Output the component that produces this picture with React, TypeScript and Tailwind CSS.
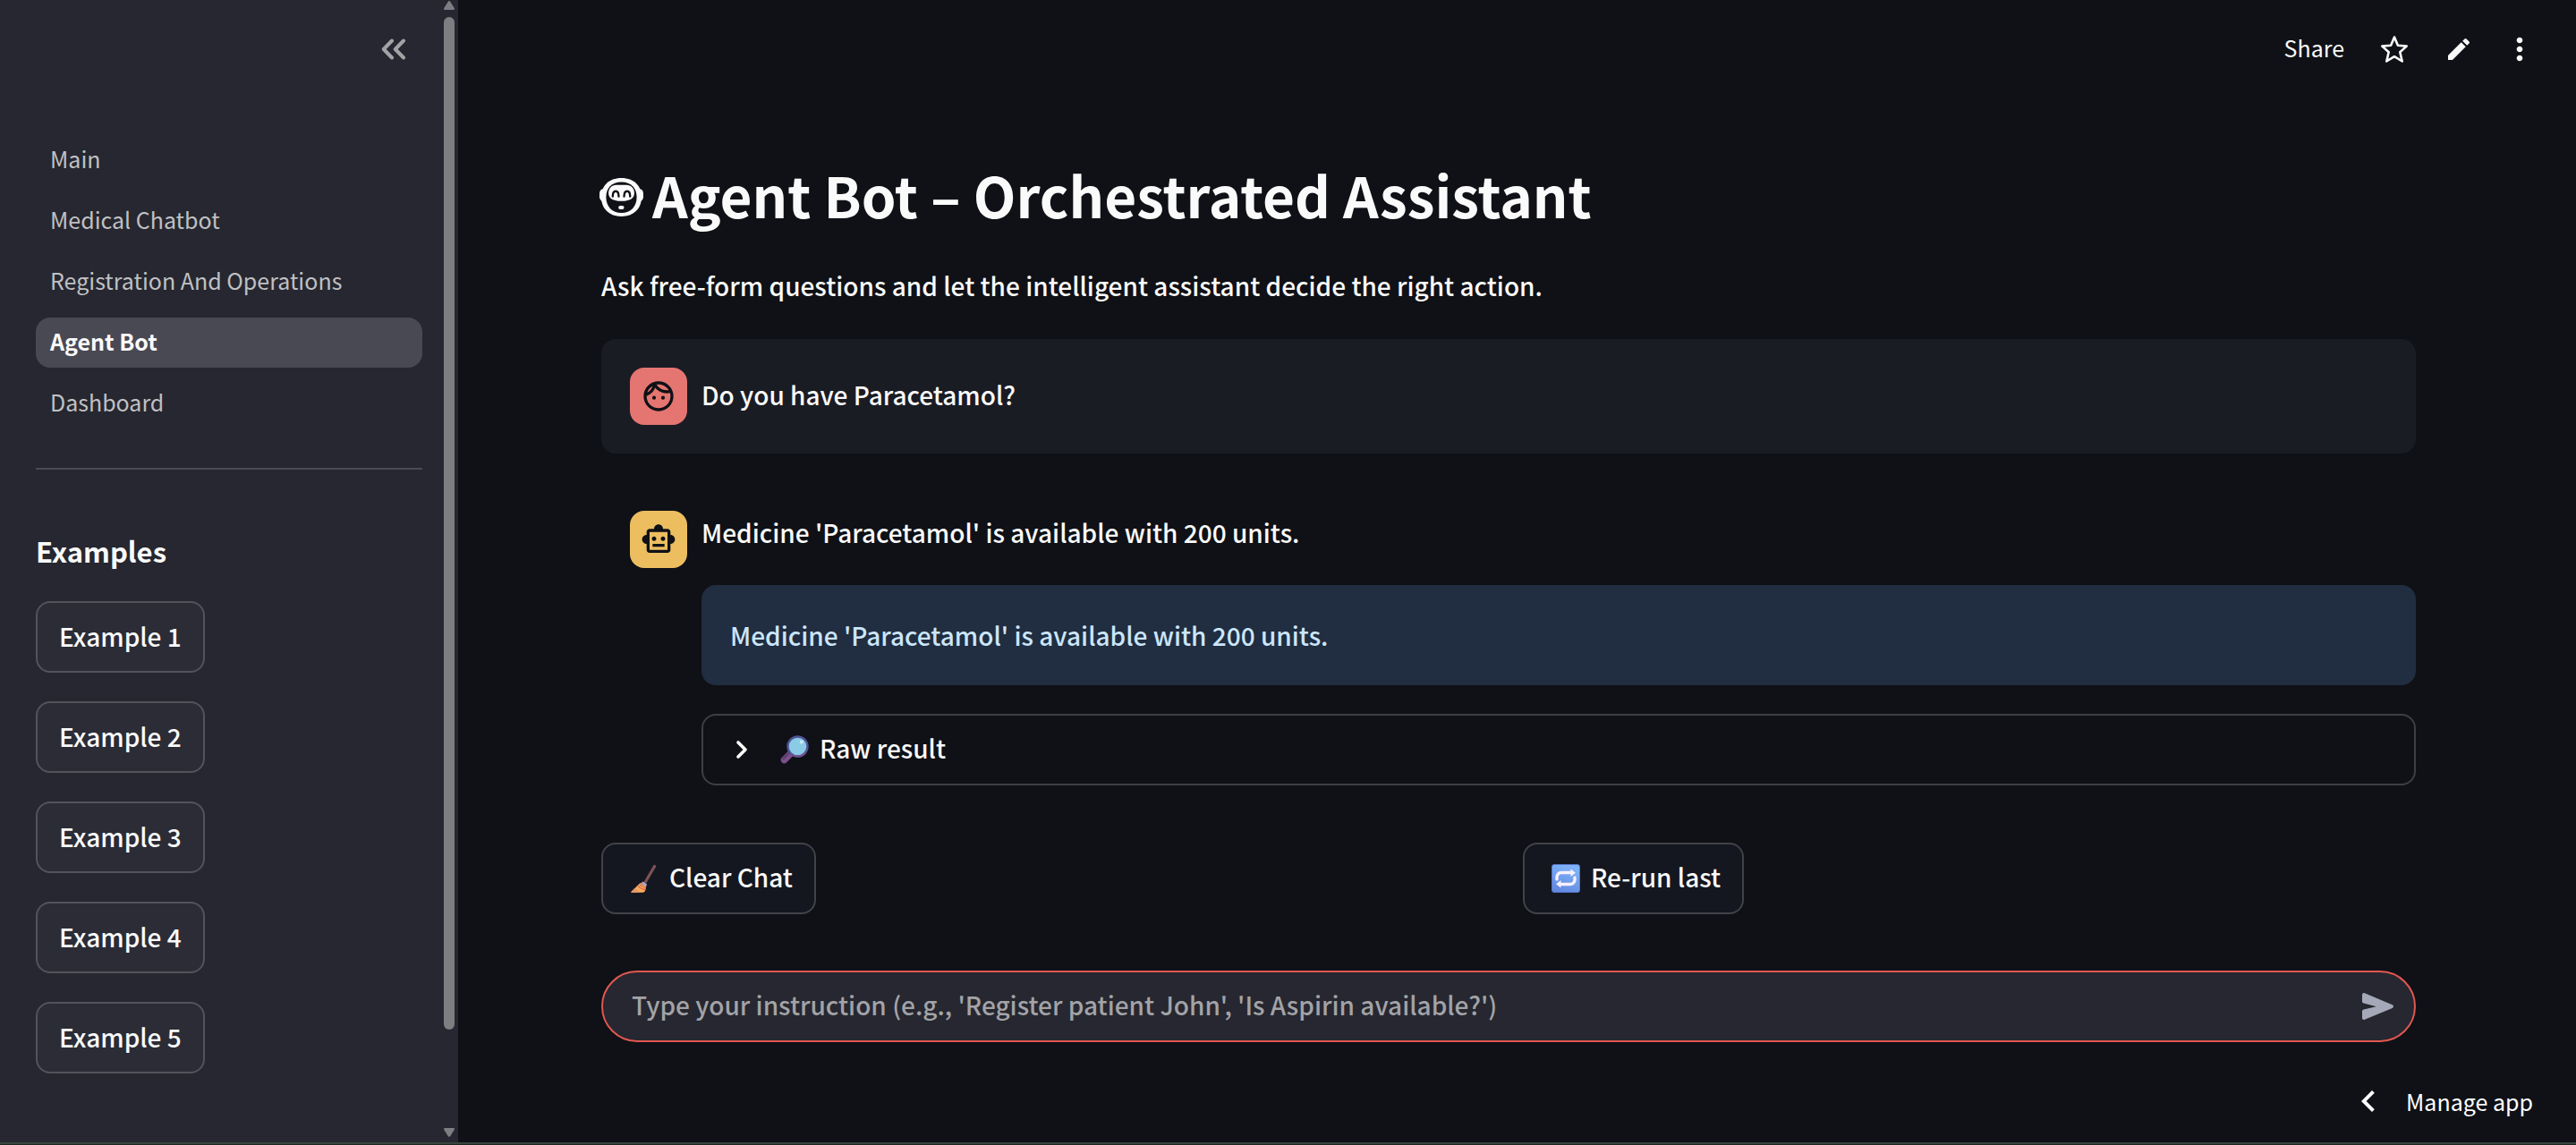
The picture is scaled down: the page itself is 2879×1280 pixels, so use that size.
import { MdChevronLeft, MdEdit, MdMoreVert, MdOutlineFace, MdOutlineSmartToy } from "react-icons/md";

const pages = ["Main", "Medical Chatbot", "Registration And Operations", "Agent Bot", "Dashboard"];
const examples = ["Example 1", "Example 2", "Example 3", "Example 4", "Example 5"];

function CollapseIcon() {
  return (
    <svg viewBox="0 0 28 24" className="h-6 w-7" fill="none" stroke="currentColor" strokeWidth="4" strokeLinecap="round" strokeLinejoin="round">
      <path d="M12 2.5 2.8 12l9.2 9.5M25 2.5 15.8 12l9.2 9.5" />
    </svg>
  );
}

function StarIcon() {
  return (
    <svg viewBox="0 0 30 30" className="size-[30px]" fill="none" stroke="currentColor" strokeWidth="2.6" strokeLinejoin="round">
      <path d="M15 1.500l3.900 9.200 9.800.900-7.400 6.600 2.400 10.300L15 23.200l-8.700 5.300 2.400-10.300L1.300 11.600l9.800-.9z" />
    </svg>
  );
}

function BotFace() {
  return (
    <svg viewBox="28 27 146 128" className="mt-1.5 h-[43px] w-[49px]" aria-hidden="true">
      <rect x="28" y="62" width="146" height="44" rx="16" fill="#fafafa" />
      <path d="M101 27c42 0 67 26 67 64s-27 64-67 64-67-26-67-64 25-64 67-64z" fill="#fafafa" />
      <path d="M101 40c33 0 51 20 51 51s-20 52-51 52-51-21-51-52 18-51 51-51z" fill="#0f1116" />
      <path d="M84 50h34c16 0 26 12 26 27s-10 27-43 27-43-12-43-27 10-27 26-27z" fill="#fafafa" />
      <path d="M72 88c0-23 20-23 20 0M110 88c0-23 20-23 20 0" fill="none" stroke="#0f1116" strokeWidth="7" strokeLinecap="round" />
      <rect x="91" y="119" width="19" height="12" rx="6" fill="#fafafa" />
    </svg>
  );
}

function MagnifierIcon() {
  return (
    <svg viewBox="0 0 32 32" className="size-8" aria-hidden="true">
      <path d="M4.500 27.500 11 21" stroke="#7d4f8c" strokeWidth="7.500" strokeLinecap="round" />
      <path d="M3.500 26 9.500 20" stroke="#60406f" strokeWidth="3" strokeLinecap="round" />
      <circle cx="19.500" cy="12.500" r="11" fill="#8acbe6" stroke="#4f5597" strokeWidth="2.400" />
      <path d="M28 19.500a11 11 0 0 1-16 1" fill="none" stroke="#75508f" strokeWidth="2.200" />
      <circle cx="23.800" cy="7.500" r="2" fill="#cfeaf8" />
    </svg>
  );
}

function BroomIcon() {
  return (
    <svg viewBox="0 0 32 32" className="size-8" aria-hidden="true">
      <path d="M27.500 2.500 17 20.500" stroke="#7d5257" strokeWidth="3.200" strokeLinecap="round" />
      <path d="M14.500 19.500l4.500 3-1 3-6-4z" fill="#b3a3c7" />
      <path d="M11.500 21c1.800 1.800 4 3 6.500 3.500 0 4-1 7.200-3.800 7.200H2c-.6 0-.8-.6-.4-1z" fill="#f2ad5c" />
      <path d="M2 31.700c-.6 0-.8-.6-.4-1l3.400-3.400c2 .4 4 2 5 4.400z" fill="#e8956a" />
      <path d="M10.500 22.500c2 2.200 4.200 3.300 7.300 3.600M9 24.500c2.200 2.400 4.600 3.600 8 3.900" fill="none" stroke="#dd5446" strokeWidth="1.100" />
    </svg>
  );
}

function RepeatIcon() {
  return (
    <svg viewBox="0 0 32 32" className="size-8" aria-hidden="true">
      <defs>
        <linearGradient id="repeat-tile" x1="0" y1="1" x2="0.400" y2="0">
          <stop offset="0" stopColor="#5f83dc" />
          <stop offset="1" stopColor="#7db2f8" />
        </linearGradient>
      </defs>
      <rect x="0.500" y="0.500" width="31" height="31" rx="2.500" fill="url(#repeat-tile)" stroke="#5d7fd8" strokeWidth="0.800" />
      <path d="M6 17v-2.500a5 5 0 0 1 5-5h12M26 15v2.500a5 5 0 0 1-5 5H9" fill="none" stroke="#f6efff" strokeWidth="3.400" strokeLinecap="round" />
      <path d="M21.500 5.500 27 9.700l-5.500 4.300zM10.500 18 5 22.300l5.500 4.300z" fill="#f6efff" />
    </svg>
  );
}

function SendIcon() {
  return (
    <svg viewBox="0 0 35 30" className="h-[30px] w-[35px]" fill="#a5a8b8" aria-hidden="true">
      <path d="M2.900.2 33.700 13.200c1.700.8 1.700 2.900 0 3.700L2.900 29.800C1.400 30.400 0 29.400 0 28v-7.400c0-1.100.7-1.900 1.700-2.100L15.800 15.200 1.700 11.500C.7 11.300 0 10.400 0 9.400V2C0 .6 1.400-.4 2.900.2z" />
    </svg>
  );
}

function Sidebar() {
  return (
    <aside className="flex w-[512px] shrink-0 bg-[#262730]">
      <div className="flex flex-1 flex-col pr-6 pl-10">
        <div className="flex h-[110px] items-center justify-end pr-[18px]">
          <button type="button" aria-label="Collapse sidebar" className="text-[#a3a3a6]">
            <CollapseIcon />
          </button>
        </div>
        <nav className="mt-[41px] flex flex-col gap-3">
          {pages.map((page) =>
            page === "Agent Bot" ? (
              <a key={page} href="#" aria-current="page" className="h-14 rounded-2xl bg-[#494954] px-4 text-[25px] leading-[52px] font-bold text-[#fafafa]">
                {page}
              </a>
            ) : (
              <a key={page} href="#" className="h-14 rounded-2xl px-4 text-[25px] leading-[52px] text-[#c0c0c3]">
                {page}
              </a>
            ),
          )}
        </nav>
        <hr className="mt-11 border-t-2 border-[#4a4b53]" />
        <h3 className="mt-[67px] text-[31px] leading-[48px] font-bold text-[#fafafa]">Examples</h3>
        <div className="mt-8 flex flex-col items-start gap-8 pb-[77px]">
          {examples.map((example) => (
            <button key={example} type="button" className="flex h-20 items-center rounded-2xl border-2 border-[#52535b] bg-[#2b2c36] px-6 pb-0.5 text-[28px] leading-[48px] font-medium text-[#fafafa]">
              {example}
            </button>
          ))}
        </div>
      </div>
      <div className="flex w-4 flex-col pr-1" aria-hidden="true">
        <svg viewBox="0 0 12 10" className="mt-px h-2.5 w-3" fill="#7d7d82">
          <path d="M4.500 1.200c.9-1.500 2.100-1.500 3 0L11.700 8c.6 1.200 0 2-1 2H1.300c-1 0-1.600-.8-1-2z" />
        </svg>
        <div className="mt-2 flex-[1132] rounded-full bg-[#7d7d82]" />
        <div className="flex-[110]" />
        <svg viewBox="0 0 12 10" className="mb-1.5 h-2.5 w-3" fill="#7d7d82">
          <path d="M4.500 8.800c.9 1.500 2.100 1.500 3 0L11.700 2c.6-1.200 0-2-1-2H1.300C.3 0-.3.800.3 2z" />
        </svg>
      </div>
    </aside>
  );
}

export default function App() {
  return (
    <div className="flex min-h-screen flex-col bg-[#0f1116] font-['Noto_Sans_CJK_SC',sans-serif] text-[#fafafa]">
      <div className="flex flex-1">
        <Sidebar />
        <div className="flex flex-1 flex-col">
          <header className="flex h-[110px] items-center justify-end gap-7 pr-[43px]">
            <button type="button" className="mr-1 pb-1 text-[25px] leading-10">Share</button>
            <button type="button" aria-label="Favorite" className="flex w-12 justify-center">
              <StarIcon />
            </button>
            <button type="button" aria-label="Edit" className="flex w-10 justify-center">
              <MdEdit className="size-8" />
            </button>
            <button type="button" aria-label="More options">
              <MdMoreVert className="size-10" />
            </button>
          </header>

          <main className="flex flex-col pt-[69px] pr-[179px] pl-40">
            <h1 className="-ml-0.5 flex items-center gap-2.5 text-[62px] leading-[76px] font-bold">
              <BotFace />
              Agent Bot – Orchestrated Assistant
            </h1>
            <p className="mt-10 text-[28px] leading-[48px] font-medium">
              Ask free-form questions and let the intelligent assistant decide the right action.
            </p>

            <section className="mt-9 flex gap-4 rounded-2xl bg-[#1a1c24] p-8">
              <div className="flex size-16 shrink-0 items-center justify-center rounded-2xl bg-[#e57570]">
                <MdOutlineFace className="size-10 text-[#0f1116]" />
              </div>
              <p className="pt-1.5 text-[28px] leading-[48px] font-medium">Do you have Paracetamol?</p>
            </section>

            <section className="mt-8 flex gap-4 py-8 pl-8">
              <div className="flex size-16 shrink-0 items-center justify-center rounded-2xl bg-[#ecbe60]">
                <MdOutlineSmartToy className="size-10 text-[#0f1116]" />
              </div>
              <div className="flex flex-1 flex-col">
                <p className="text-[28px] leading-[48px] font-medium">Medicine 'Paracetamol' is available with 200 units.</p>
                <div role="status" className="mt-[35px] rounded-2xl bg-[#212d40] p-8 text-[28px] leading-[48px] font-medium text-[#cbe6fb]">
                  Medicine 'Paracetamol' is available with 200 units.
                </div>
                <button type="button" aria-expanded="false" className="mt-8 flex h-20 items-center rounded-2xl border-2 border-[#3e3f44] px-6 text-left text-[28px] leading-[48px] font-medium">
                  <svg viewBox="0 0 24 24" className="size-10" fill="none" stroke="currentColor" strokeWidth="2.200" strokeLinecap="round" strokeLinejoin="round">
                    <path d="M9 7.200 13.800 12 9 16.800" />
                  </svg>
                  <span className="ml-[22px] flex items-center gap-3">
                    <MagnifierIcon />
                    <span className="pb-1">Raw result</span>
                  </span>
                </button>
              </div>
            </section>

            <div className="mt-8 grid grid-cols-2 gap-8">
              <div>
                <button type="button" className="flex h-20 items-center gap-3 rounded-2xl border-2 border-[#414348] bg-[#141720] px-6 pl-[30px] text-[28px] leading-[48px] font-medium">
                  <BroomIcon />
                  <span className="pb-1">Clear Chat</span>
                </button>
              </div>
              <div>
                <button type="button" className="flex h-20 items-center gap-3 rounded-2xl border-2 border-[#414348] bg-[#141720] px-6 pl-[30px] text-[28px] leading-[48px] font-medium">
                  <RepeatIcon />
                  <span className="pb-1">Re-run last</span>
                </button>
              </div>
            </div>

            <form className="mt-[63px] flex h-20 items-center rounded-full border-2 border-[#e25751] bg-[#262730] pr-[23px] pl-8">
              <input
                type="text"
                aria-label="Instruction"
                placeholder="Type your instruction (e.g., 'Register patient John', 'Is Aspirin available?')"
                className="h-12 flex-1 bg-transparent pb-1 text-[28px] font-medium outline-none placeholder:text-[#a3a3a7]"
              />
              <button type="submit" aria-label="Send">
                <SendIcon />
              </button>
            </form>
          </main>

          <footer className="mt-auto flex justify-end pr-12 pb-[22px]">
            <button type="button" className="flex items-center gap-[18px] text-[25px] leading-10 text-white">
              <MdChevronLeft className="size-12" />
              Manage app
            </button>
          </footer>
        </div>
      </div>
      <div className="h-[3px] border-t-2 border-[#38443f] bg-[#1c2625]" />
    </div>
  );
}
